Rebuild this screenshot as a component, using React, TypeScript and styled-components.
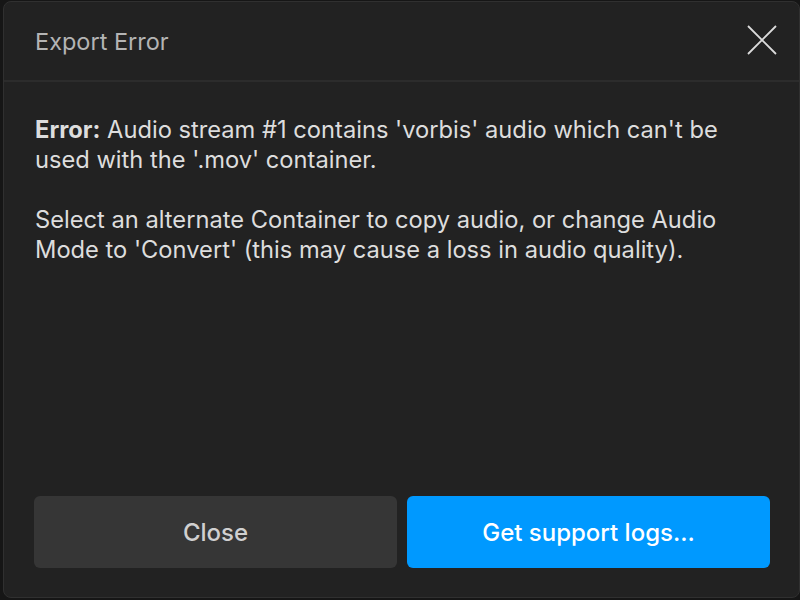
import styled, { createGlobalStyle } from "styled-components";

const GlobalStyle = createGlobalStyle`
  html, body {
    margin: 0;
    padding: 0;
    background: #161616;
    font-family: Inter, "Noto Sans", sans-serif;
  }
`;

const Page = styled.div`
  width: 800px;
  height: 600px;
  padding: 1px 0 0 3px;
  box-sizing: border-box;
  overflow: hidden;
`;

const Dialog = styled.div`
  display: flex;
  flex-direction: column;
  width: 797px;
  height: 597px;
  box-sizing: border-box;
  background: #222222;
  border: 1px solid #303030;
  border-radius: 8px;
`;

const Header = styled.div`
  display: flex;
  align-items: center;
  justify-content: space-between;
  height: 78px;
  padding: 0 21px 0 31px;
  border-bottom: 2px solid #2c2c2c;
`;

const Title = styled.h1`
  margin: 0;
  font-size: 23.5px;
  font-weight: 400;
  color: #b4b4b4;
`;

const CloseIcon = styled.button`
  display: flex;
  align-items: center;
  justify-content: center;
  width: 32px;
  height: 32px;
  margin-bottom: 3px;
  padding: 0;
  border: none;
  background: none;
  cursor: pointer;
`;

const Body = styled.div`
  flex: 1;
  padding: 33px 31px 0;
  color: #dddddd;
  font-size: 23.7px;
  line-height: 30px;
`;

const Paragraph = styled.p`
  margin: 0 0 30px;
`;

const Strong = styled.strong`
  font-weight: 700;
`;

const Footer = styled.div`
  display: flex;
  gap: 10px;
  padding: 0 29px 29px 30px;
`;

const Button = styled.button<{ $primary?: boolean }>`
  flex: 1;
  height: 72px;
  border: none;
  border-radius: 6px;
  font-family: Inter, "Noto Sans", sans-serif;
  font-size: 24px;
  font-weight: 500;
  background: ${(p) => (p.$primary ? "#0099ff" : "#363636")};
  color: ${(p) => (p.$primary ? "#ffffff" : "#d0d0d0")};
  cursor: pointer;
`;

export default function App() {
  return (
    <>
      <GlobalStyle />
      <Page>
        <Dialog>
          <Header>
            <Title>Export Error</Title>
            <CloseIcon aria-label="Close">
              <svg width="30" height="30" viewBox="0 0 30 30">
                <path
                  d="M1 1 L29 29 M29 1 L1 29"
                  stroke="#dcdcdc"
                  strokeWidth="1.8"
                  fill="none"
                />
              </svg>
            </CloseIcon>
          </Header>
          <Body>
            <Paragraph>
              <Strong>Error:</Strong> Audio stream #1 contains 'vorbis' audio
              which can't be used with the '.mov' container.
            </Paragraph>
            <Paragraph>
              Select an alternate Container to copy audio, or change Audio Mode
              to 'Convert' (this may cause a loss in audio quality).
            </Paragraph>
          </Body>
          <Footer>
            <Button>Close</Button>
            <Button $primary>Get support logs...</Button>
          </Footer>
        </Dialog>
      </Page>
    </>
  );
}
